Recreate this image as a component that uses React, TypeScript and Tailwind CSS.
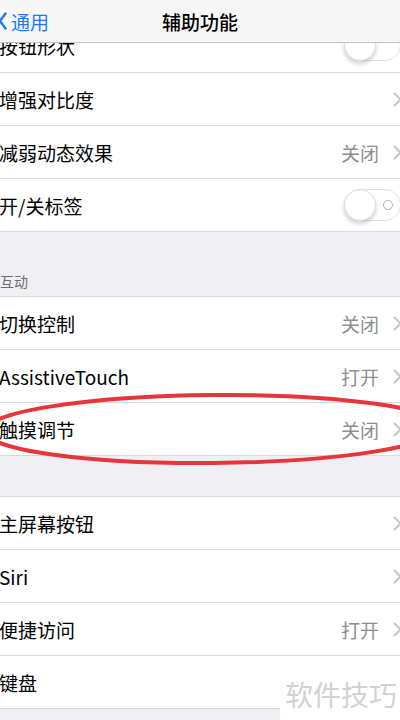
import React from "react";

const font = { fontFamily: '"Noto Sans CJK SC", "Noto Sans", sans-serif' };

function Chevron() {
  return (
    <svg width="9" height="15" viewBox="0 0 9 15" className="ml-[14px] mr-[-2px] shrink-0">
      <path d="M1.5 1.5 L7.5 7.5 L1.5 13.5" fill="none" stroke="#c7c7cc" strokeWidth="2" strokeLinecap="round" strokeLinejoin="round" />
    </svg>
  );
}

function Toggle({ label }: { label?: boolean }) {
  return (
    <div className="relative w-[57px] h-[32px] rounded-full border border-[#e2e2e2] bg-white shrink-0 mr-[-1px]">
      <div className="absolute left-[-1px] top-[-1px] w-[32px] h-[32px] rounded-full bg-white border border-[#dedede] shadow-[0_3px_4px_rgba(0,0,0,0.18)]" />
      {label && (
        <div className="absolute left-[38px] top-[10px] w-[10px] h-[10px] rounded-full border-[1.5px] border-[#b5b5b5]" />
      )}
    </div>
  );
}

type RowProps = { title: string; value?: string; chevron?: boolean; toggle?: boolean; label?: boolean };

function Row({ title, value, chevron, toggle, label }: RowProps) {
  return (
    <div className="h-[53px] bg-white border-b border-[#d9d9de] flex items-center justify-between">
      <span className="text-[19px] text-black leading-none ml-[-1px]">{title}</span>
      <div className="flex items-center">
        {value && <span className="text-[19px] text-[#8e8e93] leading-none">{value}</span>}
        {chevron && <Chevron />}
        {toggle && <Toggle label={label} />}
      </div>
    </div>
  );
}

export default function App() {
  return (
    <div className="relative w-[400px] h-[720px] overflow-hidden bg-[#efeff4]" style={font}>
      {/* Nav bar */}
      <div className="h-[43px] bg-[#f7f7f7] border-b border-[#c4c4c8] flex items-center relative">
        <div className="flex items-center text-[#1a7cf5]">
          <svg width="8" height="18" viewBox="0 0 8 18" className="ml-[-1px]">
            <path d="M6.5 1.5 L1 9 L6.5 16.5" fill="none" stroke="#1a7cf5" strokeWidth="2.4" strokeLinecap="round" strokeLinejoin="round" />
          </svg>
          <span className="ml-[4px] text-[19px] leading-none">通用</span>
        </div>
        <div className="absolute left-0 right-0 text-center text-[19px] font-medium text-black leading-none pointer-events-none">
          辅助功能
        </div>
      </div>

      {/* partially scrolled row */}
      <div className="h-[30px] overflow-hidden border-b border-[#d9d9de] bg-white">
        <div className="mt-[-24px] h-[52px] flex items-center justify-between">
          <span className="text-[19px] text-black leading-none ml-[-1px]">按钮形状</span>
          <Toggle />
        </div>
      </div>

      <Row title="增强对比度" chevron />
      <Row title="减弱动态效果" value="关闭" chevron />
      <Row title="开/关标签" toggle label />

      <div className="h-[65px] flex items-end pb-[8px] border-b border-[#d9d9de]">
        <span className="text-[14px] text-[#6d6d72] leading-none">互动</span>
      </div>

      <Row title="切换控制" value="关闭" chevron />
      <Row title="AssistiveTouch" value="打开" chevron />
      <Row title="触摸调节" value="关闭" chevron />

      <div className="h-[41px] border-b border-[#d9d9de]" />

      <Row title="主屏幕按钮" chevron />
      <Row title="Siri" chevron />
      <Row title="便捷访问" value="打开" chevron />
      <Row title="键盘" />

      {/* watermark */}
      <div className="absolute left-[280px] top-[668px] w-[120px] h-[52px] bg-white flex items-center justify-center">
        <span className="text-[28px] text-[#d2d2d2] leading-none ml-[2px]">软件技巧</span>
      </div>

      {/* red annotation ellipse */}
      <svg className="absolute inset-0 pointer-events-none" width="400" height="720" viewBox="0 0 400 720">
        <ellipse cx="213" cy="429" rx="228" ry="34" fill="none" stroke="#e8353b" strokeWidth="4" transform="rotate(-0.5 213 429)" />
      </svg>
    </div>
  );
}
